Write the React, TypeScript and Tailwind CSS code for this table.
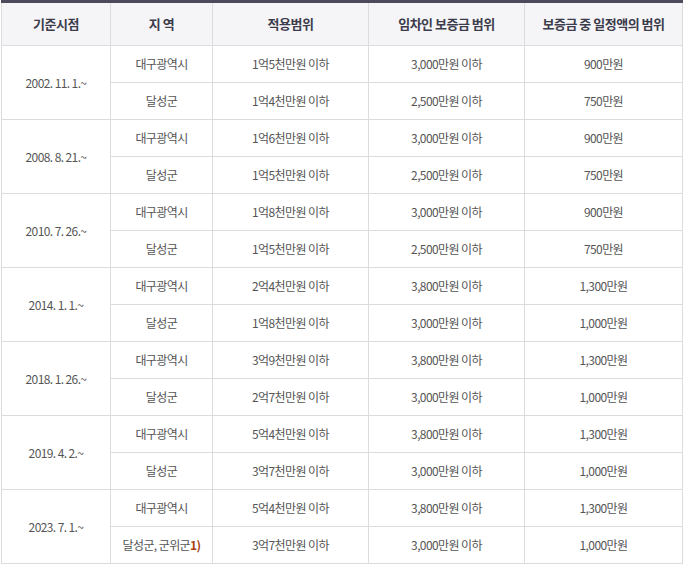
import React from "react";

interface Row {
  date: string;
  items: { region: React.ReactNode; range: string; deposit: string; fixed: string }[];
}

const rows: Row[] = [
  {
    date: "2002. 11. 1.~",
    items: [
      { region: "대구광역시", range: "1억5천만원 이하", deposit: "3,000만원 이하", fixed: "900만원" },
      { region: "달성군", range: "1억4천만원 이하", deposit: "2,500만원 이하", fixed: "750만원" },
    ],
  },
  {
    date: "2008. 8. 21.~",
    items: [
      { region: "대구광역시", range: "1억6천만원 이하", deposit: "3,000만원 이하", fixed: "900만원" },
      { region: "달성군", range: "1억5천만원 이하", deposit: "2,500만원 이하", fixed: "750만원" },
    ],
  },
  {
    date: "2010. 7. 26.~",
    items: [
      { region: "대구광역시", range: "1억8천만원 이하", deposit: "3,000만원 이하", fixed: "900만원" },
      { region: "달성군", range: "1억5천만원 이하", deposit: "2,500만원 이하", fixed: "750만원" },
    ],
  },
  {
    date: "2014. 1. 1.~",
    items: [
      { region: "대구광역시", range: "2억4천만원 이하", deposit: "3,800만원 이하", fixed: "1,300만원" },
      { region: "달성군", range: "1억8천만원 이하", deposit: "3,000만원 이하", fixed: "1,000만원" },
    ],
  },
  {
    date: "2018. 1. 26.~",
    items: [
      { region: "대구광역시", range: "3억9천만원 이하", deposit: "3,800만원 이하", fixed: "1,300만원" },
      { region: "달성군", range: "2억7천만원 이하", deposit: "3,000만원 이하", fixed: "1,000만원" },
    ],
  },
  {
    date: "2019. 4. 2.~",
    items: [
      { region: "대구광역시", range: "5억4천만원 이하", deposit: "3,800만원 이하", fixed: "1,300만원" },
      { region: "달성군", range: "3억7천만원 이하", deposit: "3,000만원 이하", fixed: "1,000만원" },
    ],
  },
  {
    date: "2023. 7. 1.~",
    items: [
      { region: "대구광역시", range: "5억4천만원 이하", deposit: "3,800만원 이하", fixed: "1,300만원" },
      {
        region: (
          <>
            달성군, 군위군<b className="text-[#a8400f] font-bold">1)</b>
          </>
        ),
        range: "3억7천만원 이하",
        deposit: "3,000만원 이하",
        fixed: "1,000만원",
      },
    ],
  },
];

const th = "h-[44px] border border-[#dcdcdf] border-t-0 font-bold text-[13px] tracking-[-0.5px] text-[#3c3c4c] text-center align-middle p-0";
const td = "h-[37px] border border-[#dcdcdf] text-center align-middle p-0 text-[12px] tracking-[-0.6px] text-[#555]";

const App: React.FC = () => {
  return (
    <div className="w-[683px] h-[565px] bg-white pl-px" style={{ fontFamily: '"Noto Sans CJK KR", "Noto Sans", sans-serif' }}>
      <table className="w-[681px] border-collapse table-fixed border-t-[3px] border-t-[#4b4b5c]">
        <colgroup>
          <col className="w-[109px]" />
          <col className="w-[102px]" />
          <col className="w-[156px]" />
          <col className="w-[156px]" />
          <col className="w-[158px]" />
        </colgroup>
        <thead>
          <tr className="bg-[#f5f5f7]">
            <th className={th}>기준시점</th>
            <th className={th}>지 역</th>
            <th className={th}>적용범위</th>
            <th className={th}>임차인 보증금 범위</th>
            <th className={th}>보증금 중 일정액의 범위</th>
          </tr>
        </thead>
        <tbody>
          {rows.map((row) =>
            row.items.map((item, i) => (
              <tr key={row.date + i}>
                {i === 0 && (
                  <td className={td} rowSpan={row.items.length}>
                    {row.date}
                  </td>
                )}
                <td className={td}>{item.region}</td>
                <td className={td}>{item.range}</td>
                <td className={td}>{item.deposit}</td>
                <td className={td}>{item.fixed}</td>
              </tr>
            ))
          )}
        </tbody>
      </table>
    </div>
  );
};

export default App;
